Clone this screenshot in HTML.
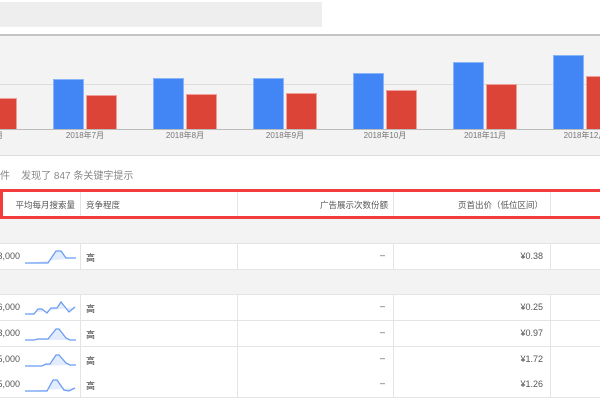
<!DOCTYPE html>
<html><head><meta charset="utf-8"><style>
*{margin:0;padding:0;box-sizing:border-box}
body{width:600px;height:400px;overflow:hidden;background:#fff;font-family:"Liberation Sans","Noto Sans CJK SC",sans-serif;position:relative;color:#333}
.a{position:absolute}
.b{position:absolute;background:#4285f4;border:1px solid #8ab4f8;border-bottom:none}
.r{position:absolute;background:#db4437;border:1px solid #f0a098;border-bottom:none}
.lbl{position:absolute;top:130px;font-size:8px;color:#777;width:60px;text-align:center;white-space:nowrap}
.row{position:absolute;left:0;width:600px;height:26px;border-bottom:1px solid #e4e4e4;background:#fff}
.row .v{position:absolute;right:580px;top:7px;font-size:9px;color:#555;white-space:nowrap}
.row .g{position:absolute;left:86px;top:7px;font-size:9px;color:#333}
.row .d{position:absolute;left:380px;top:6px;font-size:9px;color:#555}
.row .p{position:absolute;right:57px;top:7px;font-size:9px;color:#555}
.vl{position:absolute;top:0;bottom:0;width:1px;background:#e4e4e4}
.gray{position:absolute;left:0;width:600px;background:#f3f3f3;border-bottom:1px solid #e4e4e4}
</style></head><body>
<div class="a" style="left:0;top:2px;width:322px;height:25px;background:#eee"></div>
<div class="a" style="left:0;top:34px;width:600px;height:2px;background:#c4c4c4"></div>
<div class="a" style="left:0;top:36px;width:600px;height:120px;background:#f3f3f3;border-bottom:1px solid #ddd"></div>
<div class="a" style="left:0;top:84px;width:600px;height:1px;background:#ddd"></div>
<div class="a" style="left:0;top:129px;width:600px;height:1px;background:#bbb"></div>
<div class="r" style="left:-14px;top:98px;width:31px;height:31px"></div>
<div class="b" style="left:53px;top:79px;width:31px;height:50px"></div><div class="r" style="left:86px;top:95px;width:31px;height:34px"></div>
<div class="b" style="left:153px;top:78px;width:31px;height:51px"></div><div class="r" style="left:186px;top:94px;width:31px;height:35px"></div>
<div class="b" style="left:253px;top:78px;width:31px;height:51px"></div><div class="r" style="left:286px;top:93px;width:31px;height:36px"></div>
<div class="b" style="left:353px;top:73px;width:31px;height:56px"></div><div class="r" style="left:386px;top:90px;width:31px;height:39px"></div>
<div class="b" style="left:453px;top:62px;width:31px;height:67px"></div><div class="r" style="left:486px;top:84px;width:31px;height:45px"></div>
<div class="b" style="left:553px;top:55px;width:31px;height:74px"></div><div class="r" style="left:586px;top:76px;width:31px;height:53px"></div>
<div class="lbl" style="left:-27px;text-align:right;width:30px">月</div>
<div class="lbl" style="left:55px">2018年7月</div>
<div class="lbl" style="left:155px">2018年8月</div>
<div class="lbl" style="left:255px">2018年9月</div>
<div class="lbl" style="left:355px">2018年10月</div>
<div class="lbl" style="left:455px">2018年11月</div>
<div class="lbl" style="left:555px">2018年12月</div>
<div class="a" style="left:0;top:167px;font-size:10px;color:#888">件&nbsp;&nbsp;&nbsp;&nbsp;发现了 847 条关键字提示</div>
<div class="a" style="left:0;top:189px;width:603px;height:30px;border:3px solid #f33c3c"></div>
<div class="a" style="left:3px;top:192px;width:600px;height:24px;font-size:8.5px;color:#555">
<div class="a" style="right:528px;top:7px">平均每月搜索量</div>
<div class="vl" style="left:77px"></div>
<div class="a" style="left:83px;top:7px">竞争程度</div>
<div class="vl" style="left:234px"></div>
<div class="a" style="right:215px;top:7px">广告展示次数份额</div>
<div class="vl" style="left:390px"></div>
<div class="a" style="right:60px;top:7px">页首出价（低位区间）</div>
<div class="vl" style="left:547px"></div>
</div>
<div class="gray" style="top:219px;height:25px"></div>
<div class="row" style="top:244px"><div class="v" style="right:580px">3,000</div><svg class="a" style="left:24px;top:5px" width="54" height="18"><path d="M1 14 H24 L32 2 H37 L42 9 H52" fill="#e3ecfc" stroke="none"/><path d="M1 14 H24 L32 2 H37 L42 9 H52" fill="none" stroke="#6a9cf2" stroke-width="1.3"/></svg><div class="g">高</div><div class="d">–</div><div class="p">¥0.38</div><div class="vl" style="left:80px"></div><div class="vl" style="left:237px"></div><div class="vl" style="left:393px"></div><div class="vl" style="left:550px"></div></div>
<div class="gray" style="top:270px;height:25px"></div>
<div class="row" style="top:295px"><div class="v">6,000</div><svg class="a" style="left:24px;top:5px" width="54" height="18"><path d="M1 14 H10 L14 9 H18 L23 13 L27 8 H33 L37 2 L45 12 L51 7" fill="#e3ecfc" stroke="#6a9cf2" stroke-width="1.3"/></svg><div class="g">高</div><div class="d">–</div><div class="p">¥0.25</div><div class="vl" style="left:80px"></div><div class="vl" style="left:237px"></div><div class="vl" style="left:393px"></div><div class="vl" style="left:550px"></div></div>
<div class="row" style="top:321px"><div class="v">3,000</div><svg class="a" style="left:24px;top:5px" width="54" height="18"><path d="M1 14 H10 L14 13 H24 L32 3 H35 L42 12 L46 14 H52" fill="#e3ecfc" stroke="#6a9cf2" stroke-width="1.3"/></svg><div class="g">高</div><div class="d">–</div><div class="p">¥0.97</div><div class="vl" style="left:80px"></div><div class="vl" style="left:237px"></div><div class="vl" style="left:393px"></div><div class="vl" style="left:550px"></div></div>
<div class="row" style="top:347px"><div class="v">5,000</div><svg class="a" style="left:24px;top:5px" width="54" height="18"><path d="M1 14 H18 L22 12 H26 L32 3 H35 L42 11 L46 13 H52" fill="#e3ecfc" stroke="#6a9cf2" stroke-width="1.3"/></svg><div class="g">高</div><div class="d">–</div><div class="p">¥1.72</div><div class="vl" style="left:80px"></div><div class="vl" style="left:237px"></div><div class="vl" style="left:393px"></div><div class="vl" style="left:550px"></div></div>
<div class="row" style="top:372px"><div class="v">5,000</div><svg class="a" style="left:24px;top:5px" width="54" height="18"><path d="M1 14 H23 L29 3 H33 L40 13 L45 14 L51 11" fill="#e3ecfc" stroke="#6a9cf2" stroke-width="1.3"/></svg><div class="g">高</div><div class="d">–</div><div class="p">¥1.26</div><div class="vl" style="left:80px"></div><div class="vl" style="left:237px"></div><div class="vl" style="left:393px"></div><div class="vl" style="left:550px"></div></div>
</body></html>
